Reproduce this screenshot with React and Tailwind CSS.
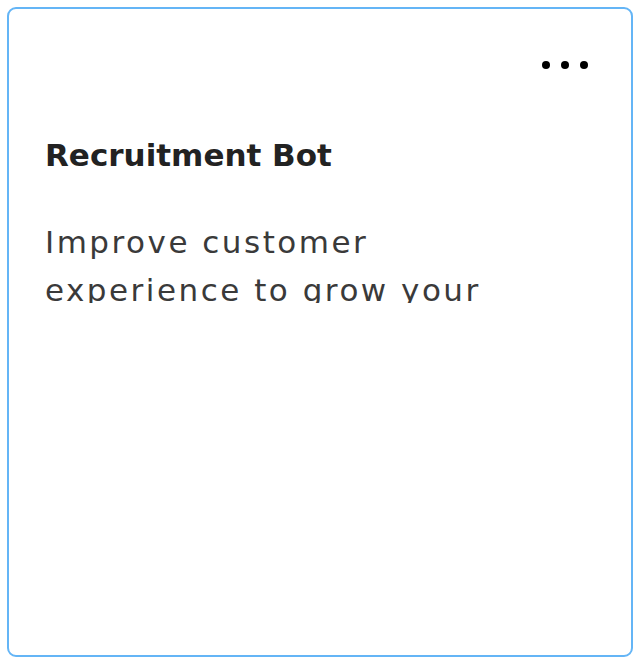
export default function App() {
  return (
    <div className="w-[640px] h-[666px] bg-white pt-[7px] pl-[7px] font-['DejaVu_Sans',sans-serif]">
      <div className="w-[626px] h-[650px] border-2 border-[#64b5f6] rounded-[9px] bg-white pl-[36px] pr-[43px]">
        <div className="flex justify-end gap-[11px] pt-[52px]">
          <span className="w-2 h-2 rounded-full bg-black" />
          <span className="w-2 h-2 rounded-full bg-black" />
          <span className="w-2 h-2 rounded-full bg-black" />
        </div>
        <h2 className="mt-[66px] text-[31px] leading-[40px] font-bold text-[#222]">Recruitment Bot</h2>
        <div className="mt-[43px] w-[440px] h-[85px] overflow-hidden">
          <p className="text-[31px] leading-[48px] tracking-[2.5px] text-[#3a3a3a]">
            Improve customer experience to grow your business
          </p>
        </div>
      </div>
    </div>
  )
}
